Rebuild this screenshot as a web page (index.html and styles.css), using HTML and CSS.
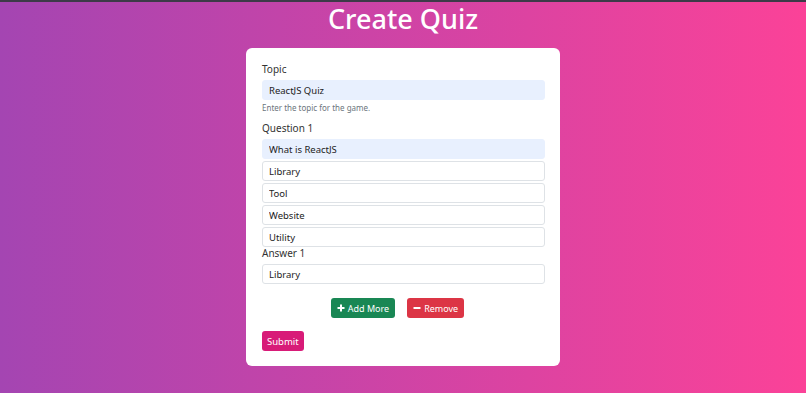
FILE: index.html
```html
<!DOCTYPE html>
<html lang="en">
<head>
  <meta charset="UTF-8" />
  <meta name="viewport" content="width=device-width, initial-scale=1.0">
  <title>Create Quiz</title>
  <link rel="stylesheet" href="styles.css">
</head>
<body>

  <h1 class="title">Create Quiz</h1>

  <form class="card">
    <label class="label">Topic</label>
    <input class="field filled" value="ReactJS Quiz">
    <p class="help">Enter the topic for the game.</p>

    <label class="label q-label">Question 1</label>
    <div class="options">
      <input class="field filled" value="What is ReactJS">
      <input class="field" value="Library">
      <input class="field" value="Tool">
      <input class="field" value="Website">
      <input class="field" value="Utility">
    </div>

    <label class="label a-label">Answer 1</label>
    <input class="field" value="Library">

    <div class="actions">
      <button type="button" class="btn btn-green">
        <svg width="8" height="8" viewBox="0 0 8 8"><path d="M4 0.5v7M0.5 4h7" stroke="#fff" stroke-width="2"/></svg>
        Add More
      </button>
      <button type="button" class="btn btn-red">
        <svg width="8" height="8" viewBox="0 0 8 8"><path d="M0.5 4h7" stroke="#fff" stroke-width="2"/></svg>
        Remove
      </button>
    </div>

    <button type="button" class="btn btn-pink">Submit</button>
  </form>

</body>
</html>
```

FILE: styles.css
```css
body {
  margin: 0;
  height: 393px;
  box-sizing: border-box;
  border-top: 2px solid #3d3a48;
  background: linear-gradient(to right, #a445b2, #fb4298);
  font-family: "Noto Sans", sans-serif;
  color: #333;
  overflow: hidden;
}

.title {
  margin: 0;
  height: 46px;
  padding-top: 1px;
  box-sizing: border-box;
  line-height: 32px;
  text-align: center;
  color: #fff;
  font-size: 27px;
  font-weight: 500;
}

.card {
  width: 314px;
  margin: 0 auto;
  box-sizing: border-box;
  padding: 14px 15px 15px 16px;
  background: #fff;
  border-radius: 6px;
  display: flex;
  flex-direction: column;
}

.label {
  font-size: 10px;
  line-height: 14px;
  margin-bottom: 4px;
  color: #333;
}

.q-label {
  margin-top: 8px;
}

.a-label {
  margin-top: -1px;
}

.field {
  box-sizing: border-box;
  height: 20px;
  width: 100%;
  padding: 0 6px;
  border: 1px solid #dee2e6;
  border-radius: 3px;
  font-family: inherit;
  font-size: 9.5px;
  color: #222;
  background: #fff;
  outline: none;
}

.field.filled {
  background: #e8f0fe;
  border-color: #e8f0fe;
}

.help {
  margin: 3px 0 0;
  font-size: 8px;
  line-height: 10px;
  color: #6c757d;
}

.options {
  display: flex;
  flex-direction: column;
  gap: 2px;
}

.actions {
  display: flex;
  justify-content: center;
  gap: 12px;
  margin: 14px 12px 13px 0;
}

.btn {
  height: 20px;
  padding: 0 6px;
  border: none;
  border-radius: 3px;
  font-family: inherit;
  font-size: 9px;
  color: #fff;
  display: flex;
  align-items: center;
  gap: 3px;
  cursor: pointer;
}

.btn-green {
  background: #198754;
}

.btn-red {
  background: #dc3545;
}

.btn-pink {
  align-self: flex-start;
  padding: 0 5px;
  font-size: 9.5px;
  background: #d81b78;
}
```
